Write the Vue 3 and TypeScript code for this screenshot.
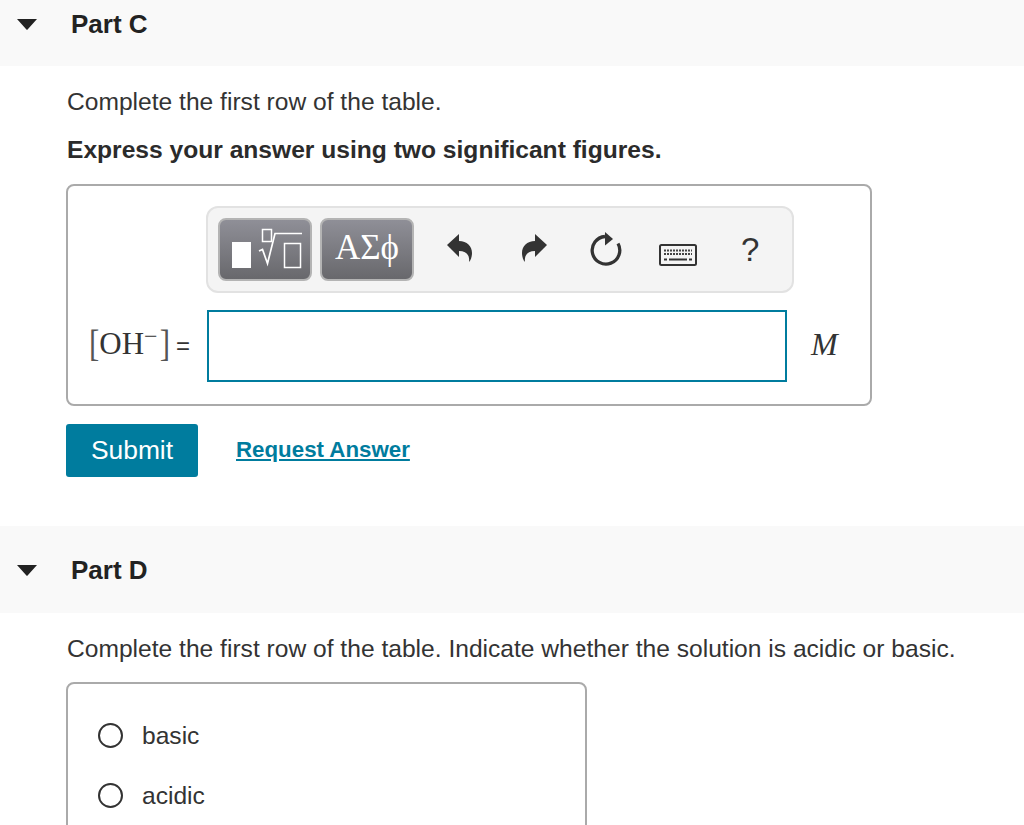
<script setup lang="ts">
const options: string[] = ['basic', 'acidic']
</script>

<template>
  <div class="page">
    <section class="part-head part-c">
      <svg class="caret" viewBox="0 0 22 12" width="22" height="12"><path d="M1 1h20l-9.200 10.200a1 1 0 0 1-1.600 0z" fill="#222" /></svg>
      <h2>Part C</h2>
    </section>
    <div class="body">
      <p class="prompt">Complete the first row of the table.</p>
      <p class="prompt strong">Express your answer using two significant figures.</p>

      <div class="answer-box">
        <div class="toolbar">
          <button class="tool">
            <svg viewBox="0 0 90 59" width="90" height="59">
              <rect x="12" y="22" width="19" height="26" fill="#fff" />
              <rect x="42.500" y="9.500" width="9" height="12" fill="none" stroke="#fff" stroke-width="1.500" />
              <path d="M39 31l3.500-1.500 5 14 7.500-30h27" fill="none" stroke="#fff" stroke-width="1.700" />
              <rect x="64.500" y="23.500" width="16" height="24" fill="none" stroke="#fff" stroke-width="1.500" />
            </svg>
          </button>
          <button class="tool greek">ΑΣϕ</button>
          <svg class="icon undo" viewBox="0 0 28 30" width="28" height="30"><path d="M1 12L13 1v7c8 0 13 5 13 12 0 3-1 7-3 9 1-7-3-11-10-11v6z" fill="#333" /></svg>
          <svg class="icon redo" viewBox="0 0 28 30" width="28" height="30"><path d="M27 12L15 1v7C7 8 2 13 2 20c0 3 1 7 3 9-1-7 3-11 10-11v6z" fill="#333" /></svg>
          <svg class="icon reset" viewBox="0 0 34 36" width="34" height="36"><path d="M29 11.500A13.800 13.800 0 1 1 16 4.500" fill="none" stroke="#333" stroke-width="3.300" /><path d="M16 0l8 7-8 6.500z" fill="#333" /></svg>
          <svg class="icon keys" viewBox="0 0 38 22" width="38" height="22">
            <rect x="1" y="1" width="36" height="20" rx="1.500" fill="none" stroke="#333" stroke-width="2" />
            <path d="M5 6.500h28M5 10h28" stroke="#444" stroke-width="2" stroke-dasharray="2 1" />
            <path d="M5 15.500h3M10 15.500h18M30 15.500h3" stroke="#333" stroke-width="2" />
          </svg>
          <span class="help">?</span>
        </div>
        <div class="math-row">
          <span class="label"><span class="math"><span class="br">[</span>OH<sup>−</sup><span class="br close">]</span></span><span class="eq">=</span></span>
          <div class="field"></div>
          <span class="unit">M</span>
        </div>
      </div>

      <div class="actions">
        <button class="submit">Submit</button>
        <a class="request" href="#">Request Answer</a>
      </div>
    </div>

    <section class="part-head part-d">
      <svg class="caret" viewBox="0 0 22 12" width="22" height="12"><path d="M1 1h20l-9.200 10.200a1 1 0 0 1-1.600 0z" fill="#222" /></svg>
      <h2>Part D</h2>
    </section>
    <div class="body">
      <p class="prompt">Complete the first row of the table. Indicate whether the solution is acidic or basic.</p>
      <div class="choices">
        <label v-for="opt in options" :key="opt" class="choice">
          <span class="radio"></span><span class="choice-text">{{ opt }}</span>
        </label>
      </div>
    </div>
  </div>
</template>

<style scoped>
.page {
  height: 825px;
  overflow: hidden;
  font-family: 'Liberation Sans', Arial, sans-serif;
  color: #333;
  font-size: 24.600px;
  background: #fff;
}
.part-head {
  display: flex;
  align-items: flex-start;
  background: #f9f9f9;
}
.part-c {
  height: 66px;
}
.part-d {
  height: 87px;
  margin-top: 49px;
}
.part-c .caret {
  margin: 18px 0 0 16px;
}
.part-c h2 {
  margin: 9px 0 0 33px;
}
.part-d .caret {
  margin: 38px 0 0 16px;
}
.part-d h2 {
  margin: 29px 0 0 33px;
}
h2 {
  font-size: 26px;
  line-height: 30px;
  font-weight: 700;
  color: #222;
}
.body {
  padding: 0 0 0 66px;
}
.prompt {
  margin: 0;
  padding: 21px 0 0 1px;
  line-height: 30px;
  font-size: 24.600px;
}
.strong {
  padding-top: 18px;
  font-weight: 700;
  color: #2b2b2b;
}
.answer-box {
  box-sizing: border-box;
  width: 806px;
  height: 222px;
  margin-top: 19px;
  border: 2px solid #aaa;
  border-radius: 8px;
  padding: 20px 0 0 0;
}
.toolbar {
  box-sizing: border-box;
  display: flex;
  align-items: center;
  width: 588px;
  height: 87px;
  margin-left: 138px;
  padding-left: 10px;
  background: #f4f4f4;
  border: 2px solid #e2e2e2;
  border-radius: 12px;
}
.tool {
  box-sizing: border-box;
  width: 94px;
  height: 63px;
  padding: 0;
  margin-right: 8px;
  border: 2px solid #b4b4b4;
  border-radius: 8px;
  background: linear-gradient(#8f8f97, #68686c);
  color: #fff;
  display: flex;
  align-items: center;
  justify-content: center;
}
.greek {
  font-family: 'Liberation Serif', 'DejaVu Serif', serif;
  font-size: 35px;
  padding-bottom: 4px;
}
.icon {
  flex: none;
}
.undo {
  margin-left: 24px;
  margin-top: -4px;
}
.redo {
  margin-left: 46px;
  margin-top: -4px;
}
.reset {
  margin-left: 41px;
}
.keys {
  margin-left: 36px;
  margin-top: 10px;
}
.help {
  margin-left: 44px;
  font-size: 33px;
  color: #333;
}
.math-row {
  display: flex;
  align-items: center;
  margin-top: 17px;
}
.label {
  width: 139px;
  box-sizing: border-box;
  padding-left: 21px;
  margin-bottom: 4px;
  white-space: nowrap;
}
.math {
  font-family: 'Liberation Serif', serif;
  font-size: 31px;
}
.math .br {
  display: inline-block;
  line-height: 1;
  transform: scaleY(1.2);
  color: #555;
}
.math .close {
  margin-left: 2px;
}
.math sup {
  font-size: 24px;
  line-height: 0;
  vertical-align: 10px;
}
.eq {
  font-size: 24px;
  margin-left: 6px;
}
.field {
  box-sizing: border-box;
  width: 580px;
  height: 72px;
  border: 2px solid #007c9e;
}
.unit {
  margin-left: 24px;
  margin-bottom: 4px;
  font-family: 'Liberation Serif', serif;
  font-style: italic;
  font-size: 32px;
}
.actions {
  display: flex;
  align-items: center;
  margin-top: 18px;
}
.submit {
  width: 132px;
  height: 53px;
  border: 0;
  border-radius: 3px;
  background: #007c9e;
  color: #fff;
  font-family: inherit;
  font-size: 26.400px;
}
.request {
  margin-left: 38px;
  color: #007c9e;
  font-weight: 700;
  font-size: 22.300px;
  margin-top: -2px;
}
.choices {
  box-sizing: border-box;
  width: 521px;
  height: 200px;
  margin-top: 18px;
  border: 2px solid #aaa;
  border-radius: 8px;
  padding: 21px 0 0 30px;
}
.choice {
  display: flex;
  align-items: center;
  height: 60px;
}
.choice-text {
  margin-top: 2px;
}
.radio {
  box-sizing: border-box;
  width: 25px;
  height: 25px;
  margin-right: 19px;
  border: 2px solid #333;
  border-radius: 50%;
}
</style>

<style>
html, body {
  margin: 0;
  overflow: hidden;
}
</style>
